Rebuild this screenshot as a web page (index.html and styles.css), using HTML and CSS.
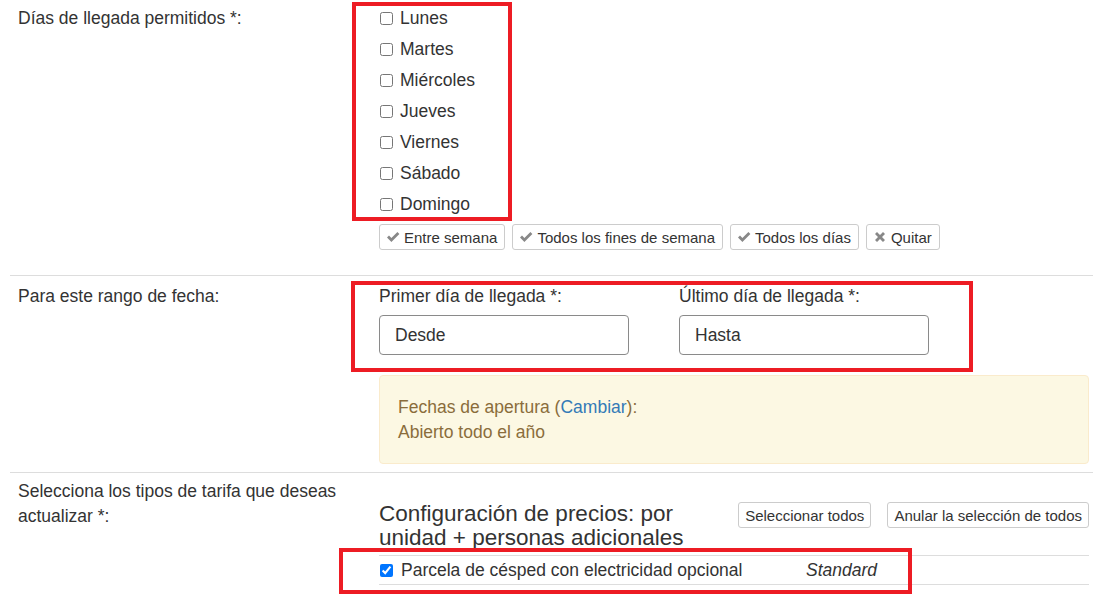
FILE: index.html
```html
<!DOCTYPE html>
<html lang="es">
<head>
    <meta charset="UTF-8">
    <meta name="viewport" content="width=device-width, initial-scale=1.0">
    <title>Actualizar tarifas</title>
    <link rel="stylesheet" href="styles.css">
</head>
<body>
    <form class="page">
        <!-- dias de llegada -->
        <div class="form-row row-days">
            <div class="row-label">Días de llegada permitidos *:</div>
            <div class="row-content">
                <label class="day"><input type="checkbox"> Lunes</label>
                <label class="day"><input type="checkbox"> Martes</label>
                <label class="day"><input type="checkbox"> Miércoles</label>
                <label class="day"><input type="checkbox"> Jueves</label>
                <label class="day"><input type="checkbox"> Viernes</label>
                <label class="day"><input type="checkbox"> Sábado</label>
                <label class="day"><input type="checkbox"> Domingo</label>
                <div class="quick-buttons">
                    <button type="button" class="btn btn-icon">
                        <svg class="icon" viewBox="0 0 14 14"><path d="M1 7.6 L3 5.6 L5.4 8 L11.4 2 L13.4 4 L5.4 12 Z"/></svg>
                        Entre semana
                    </button>
                    <button type="button" class="btn btn-icon">
                        <svg class="icon" viewBox="0 0 14 14"><path d="M1 7.6 L3 5.6 L5.4 8 L11.4 2 L13.4 4 L5.4 12 Z"/></svg>
                        Todos los fines de semana
                    </button>
                    <button type="button" class="btn btn-icon">
                        <svg class="icon" viewBox="0 0 14 14"><path d="M1 7.6 L3 5.6 L5.4 8 L11.4 2 L13.4 4 L5.4 12 Z"/></svg>
                        Todos los días
                    </button>
                    <button type="button" class="btn btn-icon">
                        <svg class="icon" viewBox="0 0 14 14"><path d="M2 4 L4 2 L7 5 L10 2 L12 4 L9 7 L12 10 L10 12 L7 9 L4 12 L2 10 L5 7 Z"/></svg>
                        Quitar
                    </button>
                </div>
            </div>
        </div>

        <!-- rango de fechas -->
        <div class="form-row row-dates">
            <div class="row-label">Para este rango de fecha:</div>
            <div class="row-content">
                <div class="date-fields">
                    <div class="date-field">
                        <label for="desde">Primer día de llegada *:</label>
                        <input type="text" id="desde" placeholder="Desde">
                    </div>
                    <div class="date-field">
                        <label for="hasta">Último día de llegada *:</label>
                        <input type="text" id="hasta" placeholder="Hasta">
                    </div>
                </div>
                <div class="alert">
                    Fechas de apertura (<a href="#">Cambiar</a>):<br>
                    Abierto todo el año
                </div>
            </div>
        </div>

        <!-- tipos de tarifa -->
        <div class="form-row row-rates">
            <div class="row-label">Selecciona los tipos de tarifa que deseas actualizar *:</div>
            <div class="row-content">
                <div class="rates-header">
                    <h3>Configuración de precios: por unidad + personas adicionales</h3>
                    <div class="rates-actions">
                        <button type="button" class="btn">Seleccionar todos</button>
                        <button type="button" class="btn">Anular la selección de todos</button>
                    </div>
                </div>
                <div class="rate-row">
                    <label class="rate-name"><input type="checkbox" checked> Parcela de césped con electricidad opcional</label>
                    <span class="rate-type">Standard</span>
                </div>
            </div>
        </div>
    </form>

    <!-- marcas rojas de la captura -->
    <div class="mark mark-days"></div>
    <div class="mark mark-dates"></div>
    <div class="mark mark-rate"></div>
</body>
</html>
```

FILE: styles.css
```css
body {
    font-family: "Liberation Sans", Arial, sans-serif;
    font-size: 17.5px;
    color: #333;
    background: #fff;
    margin: 0;
}

.page {
    margin-left: 10px;
}

.form-row {
    display: grid;
    grid-template-columns: 369px 1fr;
    padding-right: 4px;
}

.form-row + .form-row {
    border-top: 1px solid #ddd;
}

.row-label {
    padding-left: 8px;
    padding-right: 8px;
}

/* dias */
.row-days {
    padding-top: 7px;
    padding-bottom: 25px;
    line-height: 22px;
}

.day {
    display: flex;
    align-items: center;
    height: 22px;
    margin-bottom: 9px;
}

.day input {
    width: 13px;
    height: 13px;
    margin: 0 7px 0 1px;
}

.quick-buttons {
    display: flex;
    gap: 7px;
    margin-top: 1px;
}

.btn {
    font-family: inherit;
    font-size: 15px;
    color: #333;
    background: #fff;
    border: 1px solid #ccc;
    border-radius: 3px;
    height: 26px;
    padding: 0 6px;
    cursor: pointer;
}

.btn-icon {
    display: flex;
    align-items: center;
    gap: 4px;
    padding: 0 7px 0 6px;
}

.icon {
    width: 14px;
    height: 14px;
    fill: #888;
}

/* fechas */
.row-dates {
    padding-top: 9px;
    padding-bottom: 8px;
    line-height: 22px;
}

.date-fields {
    display: grid;
    grid-template-columns: 300px 300px;
}

.date-field label {
    display: block;
    margin-bottom: 8px;
}

.date-field input {
    box-sizing: border-box;
    width: 250px;
    height: 40px;
    padding: 0 15px;
    font-family: inherit;
    font-size: 17.5px;
    color: #333;
    border: 1px solid #8a8a8a;
    border-radius: 4px;
}

.date-field input::placeholder {
    color: #333;
}

.alert {
    margin-top: 20px;
    padding: 19px 18px 18px;
    line-height: 25px;
    color: #8a6d3b;
    background: #fcf8e3;
    border: 1px solid #faebcc;
    border-radius: 4px;
}

.alert a {
    color: #337ab7;
    text-decoration: none;
}

/* tarifas */
.row-rates {
    padding-bottom: 20px;
}

.row-rates .row-label {
    padding-top: 6px;
    line-height: 25px;
}

.row-rates .row-content {
    padding-top: 29px;
}

.rates-header {
    display: flex;
    align-items: flex-start;
    gap: 10px;
    margin-bottom: 5px;
}

.rates-header h3 {
    flex: 1;
    margin: 0;
    font-size: 22.5px;
    font-weight: normal;
    line-height: 24px;
}

.rates-actions {
    display: flex;
    gap: 16px;
}

.rate-row {
    display: grid;
    grid-template-columns: 427px 1fr;
    align-items: center;
    height: 28px;
    border-top: 1px solid #ddd;
    border-bottom: 1px solid #ddd;
}

.rate-name {
    display: flex;
    align-items: center;
}

.rate-name input {
    width: 13px;
    height: 13px;
    margin: 0 8px 0 1px;
}

.rate-type {
    font-style: italic;
}

/* marcas */
.mark {
    position: absolute;
    box-sizing: border-box;
    border: 4px solid #ed1c24;
}

.mark-days {
    left: 352px;
    top: 2px;
    width: 160px;
    height: 219px;
}

.mark-dates {
    left: 351px;
    top: 281px;
    width: 622px;
    height: 91px;
}

.mark-rate {
    left: 339px;
    top: 548px;
    width: 573px;
    height: 46px;
}
```
